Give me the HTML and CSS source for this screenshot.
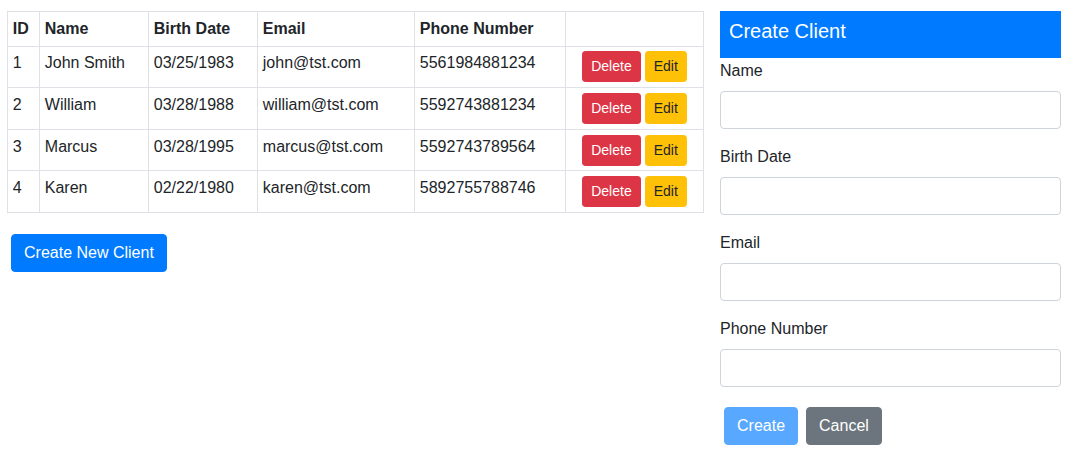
FILE: index.html
```html
<!DOCTYPE html>
<html>
<head>
<meta charset="utf-8">
<link rel="stylesheet" href="styles.css">
</head>
<body>
<div class="page">
  <div class="left">
    <table class="clients">
      <colgroup>
        <col class="c-id"><col class="c-name"><col class="c-birth"><col class="c-email"><col class="c-phone"><col class="c-actions">
      </colgroup>
      <thead>
        <tr><th>ID</th><th>Name</th><th>Birth Date</th><th>Email</th><th>Phone Number</th><th></th></tr>
      </thead>
      <tbody>
        <tr><td>1</td><td>John Smith</td><td>03/25/1983</td><td>john@tst.com</td><td>5561984881234</td><td><div class="actions"><button class="btn btn-sm btn-danger">Delete</button><button class="btn btn-sm btn-warning">Edit</button></div></td></tr>
        <tr><td>2</td><td>William</td><td>03/28/1988</td><td>william@tst.com</td><td>5592743881234</td><td><div class="actions"><button class="btn btn-sm btn-danger">Delete</button><button class="btn btn-sm btn-warning">Edit</button></div></td></tr>
        <tr><td>3</td><td>Marcus</td><td>03/28/1995</td><td>marcus@tst.com</td><td>5592743789564</td><td><div class="actions"><button class="btn btn-sm btn-danger">Delete</button><button class="btn btn-sm btn-warning">Edit</button></div></td></tr>
        <tr><td>4</td><td>Karen</td><td>02/22/1980</td><td>karen@tst.com</td><td>5892755788746</td><td><div class="actions"><button class="btn btn-sm btn-danger">Delete</button><button class="btn btn-sm btn-warning">Edit</button></div></td></tr>
      </tbody>
    </table>
    <button class="btn btn-primary new-btn">Create New Client</button>
  </div>
  <div class="right">
    <div class="panel-head">Create Client</div>
    <form class="form">
      <div class="group"><label>Name</label><input class="control" type="text"></div>
      <div class="group"><label>Birth Date</label><input class="control" type="text"></div>
      <div class="group"><label>Email</label><input class="control" type="text"></div>
      <div class="group"><label>Phone Number</label><input class="control" type="text"></div>
      <div class="form-actions">
        <button type="button" class="btn btn-primary disabled">Create</button>
        <button type="button" class="btn btn-secondary">Cancel</button>
      </div>
    </form>
  </div>
</div>
</body>
</html>
```
FILE: styles.css
```css
* { box-sizing: border-box; }
html, body { margin: 0; padding: 0; background: #fff; }
body {
  font-family: "Liberation Sans", Arial, sans-serif;
  font-size: 16px;
  line-height: 1.5;
  color: #212529;
}
.page {
  display: flex;
  gap: 16px;
  padding: 11px 8px 0 7px;
}
.left { width: 697px; }
.right { width: 341px; }

.clients {
  width: 696px;
  border-collapse: collapse;
  table-layout: fixed;
  margin-bottom: 16px;
}
.c-id { width: 32px; }
.c-name { width: 109px; }
.c-birth { width: 109px; }
.c-email { width: 157px; }
.c-phone { width: 151px; }
.c-actions { width: 138px; }
.clients th, .clients td {
  border: 1px solid #dee2e6;
  padding: 4.8px;
  vertical-align: top;
  text-align: left;
  white-space: nowrap;
}
.clients th { font-weight: bold; }
.actions { display: flex; justify-content: center; gap: 4px; }

.btn {
  display: inline-block;
  font-family: inherit;
  font-weight: 400;
  border: 1px solid transparent;
  font-size: 16px;
  line-height: 1.5;
  padding: 6px 12px;
  border-radius: 4px;
  cursor: pointer;
}
.btn-sm {
  font-size: 14px;
  padding: 4px 8px;
  border-radius: 3.2px;
}
.btn-danger { background: #dc3545; border-color: #dc3545; color: #fff; }
.btn-warning { background: #ffc107; border-color: #ffc107; color: #212529; }
.btn-primary { background: #007bff; border-color: #007bff; color: #fff; }
.btn-primary.disabled { opacity: .65; }
.btn-secondary { background: #6c757d; border-color: #6c757d; color: #fff; }
.new-btn { margin: 5px 4px; }

.panel-head {
  background: #007bff;
  color: #fff;
  font-size: 20px;
  line-height: 24px;
  padding: 8px 9px 15px;
}
.form { margin: 0; padding-top: 1px; }
.group { margin-bottom: 16px; }
.group label {
  display: block;
  line-height: 24px;
  margin-bottom: 8px;
}
.control {
  display: block;
  width: 100%;
  height: 38px;
  padding: 6px 12px;
  font-family: inherit;
  font-size: 16px;
  color: #495057;
  background: #fff;
  border: 1px solid #ced4da;
  border-radius: 4px;
}
.form-actions { display: flex; }
.form-actions .btn { margin: 4px; }
```
